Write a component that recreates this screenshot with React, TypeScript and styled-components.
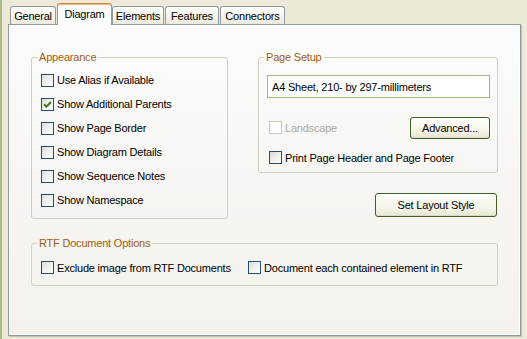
import React from 'react'
import styled, { createGlobalStyle } from 'styled-components'

const GlobalStyle = createGlobalStyle`
  html, body {
    margin: 0;
    padding: 0;
    background: #ece9d8;
  }
  body {
    font-family: 'Liberation Sans', Arial, sans-serif;
    font-size: 11px;
    color: #000;
  }
`

const Frame = styled.div`
  width: 527px;
  height: 339px;
  box-sizing: border-box;
  border-left: 2px solid #a9bf86;
  padding: 0 6px;
  background: #ece9d8;
  display: flex;
  flex-direction: column;
  letter-spacing: -0.2px;
`

const TabStrip = styled.div`
  display: flex;
  align-items: flex-end;
  height: 24px;
  padding-left: 2px;
`

const Tab = styled.div<{ $w: number; $active?: boolean }>`
  width: ${(p) => p.$w}px;
  height: ${(p) => (p.$active ? 22 : 18)}px;
  box-sizing: border-box;
  margin-right: ${(p) => (p.$active ? 0 : 1)}px;
  margin-bottom: ${(p) => (p.$active ? -1 : 0)}px;
  position: relative;
  z-index: ${(p) => (p.$active ? 2 : 0)};
  border: 1px solid #919b9c;
  border-bottom: none;
  border-top-color: ${(p) => (p.$active ? '#d5883c' : '#919b9c')};
  border-radius: 3px 3px 0 0;
  background: ${(p) =>
    p.$active ? '#fcfcfe' : 'linear-gradient(#fffffd, #f3f1e7 70%, #ebe9dc)'};
  box-shadow: ${(p) => (p.$active ? 'inset 0 1px 0 #f5b76c' : 'none')};
  display: flex;
  align-items: center;
  justify-content: center;
  padding-bottom: ${(p) => (p.$active ? 2 : 0)}px;
  white-space: nowrap;
`

const Panel = styled.div`
  height: 312px;
  box-sizing: border-box;
  border: 1px solid #919b9c;
  box-shadow: 1px 1px 0 #c2c0b2, inset -1px -1px 0 #fff;
  background: linear-gradient(#fcfcfe, #f6f5f1 55%, #f3f2ed);
  padding: 25px 0 0 22px;
  display: grid;
  grid-template-columns: 197px 240px;
  column-gap: 30px;
  row-gap: 17px;
  align-content: start;
`

const Group = styled.fieldset`
  margin: 0;
  min-width: 0;
  box-sizing: border-box;
  border: 1px solid #d0d0bf;
  border-radius: 3px;
  padding: 0 7px 6px 5px;
`

const Wide = styled(Group)`
  grid-column: 1 / span 2;
`

const Legend = styled.legend`
  padding: 0 2px;
  margin: 0;
  line-height: 14px;
  color: #a35c10;
`

const CheckList = styled.div`
  padding: 4px 0 0 4px;
`

const Row = styled.div<{ $h: number }>`
  height: ${(p) => p.$h}px;
  display: flex;
  align-items: center;
`

const RightColumn = styled.div`
  display: flex;
  flex-direction: column;
  gap: 20px;
`

const SetupBody = styled.div`
  padding: 11px 0 0 3px;
  display: flex;
  flex-direction: column;
`

const TextBox = styled.div`
  height: 23px;
  box-sizing: border-box;
  border: 1px solid #a5b97f;
  background: #fff;
  padding: 0 4px;
  display: flex;
  align-items: center;
  white-space: nowrap;
`

const SetupRow = styled.div<{ $top: number; $h: number }>`
  margin-top: ${(p) => p.$top}px;
  height: ${(p) => p.$h}px;
  padding-left: 2px;
  display: flex;
  align-items: center;
  justify-content: space-between;
`

const RtfBody = styled.div`
  padding: 9px 0 3px 4px;
  display: grid;
  grid-template-columns: 207px auto;
`

const Box = styled.span<{ $disabled?: boolean }>`
  width: 13px;
  height: 13px;
  box-sizing: border-box;
  flex: none;
  border: 1px solid ${(p) => (p.$disabled ? '#cac8bb' : '#1c5180')};
  background: ${(p) =>
    p.$disabled
      ? '#fff'
      : 'linear-gradient(135deg, #dcdbd5 0%, #efeee9 45%, #fdfdfb 100%)'};
  display: flex;
  align-items: center;
  justify-content: center;
`

const Label = styled.span<{ $disabled?: boolean }>`
  margin-left: 3px;
  color: ${(p) => (p.$disabled ? '#aca899' : '#000')};
  white-space: nowrap;
`

const Button = styled.button<{ $w: number; $h: number }>`
  width: ${(p) => p.$w}px;
  height: ${(p) => p.$h}px;
  flex: none;
  padding: 0;
  font: inherit;
  letter-spacing: inherit;
  color: #000;
  border: 1px solid #3f5e24;
  border-radius: 3px;
  background: linear-gradient(#fffffa, #f6f5ea 60%, #e8e6d4);
  box-shadow: inset 0 -1px 0 #dcd9c6;
`

const RightButton = styled(Button)`
  align-self: flex-end;
  margin-right: 1px;
`

const Check = ({
  label,
  checked,
  disabled,
}: {
  label: string
  checked?: boolean
  disabled?: boolean
}) => (
  <>
    <Box $disabled={disabled}>
      {checked && (
        <svg width="9" height="9" viewBox="0 0 9 9">
          <path d="M1 4.2 L3.4 6.6 L8 2" fill="none" stroke="#3f7a1a" strokeWidth="2" />
        </svg>
      )}
    </Box>
    <Label $disabled={disabled}>{label}</Label>
  </>
)

const appearance = [
  { label: 'Use Alias if Available' },
  { label: 'Show Additional Parents', checked: true },
  { label: 'Show Page Border' },
  { label: 'Show Diagram Details' },
  { label: 'Show Sequence Notes' },
  { label: 'Show Namespace' },
]

const tabs = [
  { label: 'General', w: 46 },
  { label: 'Diagram', w: 55, active: true },
  { label: 'Elements', w: 52 },
  { label: 'Features', w: 54 },
  { label: 'Connectors', w: 65 },
]

export default function App() {
  return (
    <Frame>
      <GlobalStyle />
      <TabStrip>
        {tabs.map((t) => (
          <Tab key={t.label} $w={t.w} $active={t.active}>
            {t.label}
          </Tab>
        ))}
      </TabStrip>
      <Panel>
        <Group>
          <Legend>Appearance</Legend>
          <CheckList>
            {appearance.map((a) => (
              <Row key={a.label} $h={24}>
                <Check label={a.label} checked={a.checked} />
              </Row>
            ))}
          </CheckList>
        </Group>
        <RightColumn>
          <Group>
            <Legend>Page Setup</Legend>
            <SetupBody>
              <TextBox>A4 Sheet, 210- by 297-millimeters</TextBox>
              <SetupRow $top={18} $h={23}>
                <Row $h={23}>
                  <Check label="Landscape" disabled />
                </Row>
                <Button $w={80} $h={22}>
                  Advanced...
                </Button>
              </SetupRow>
              <SetupRow $top={10} $h={17}>
                <Row $h={17}>
                  <Check label="Print Page Header and Page Footer" />
                </Row>
              </SetupRow>
            </SetupBody>
          </Group>
          <RightButton $w={122} $h={24}>
            Set Layout Style
          </RightButton>
        </RightColumn>
        <Wide>
          <Legend>RTF Document Options</Legend>
          <RtfBody>
            <Row $h={17}>
              <Check label="Exclude image from RTF Documents" />
            </Row>
            <Row $h={17}>
              <Check label="Document each contained element in RTF" />
            </Row>
          </RtfBody>
        </Wide>
      </Panel>
    </Frame>
  )
}
